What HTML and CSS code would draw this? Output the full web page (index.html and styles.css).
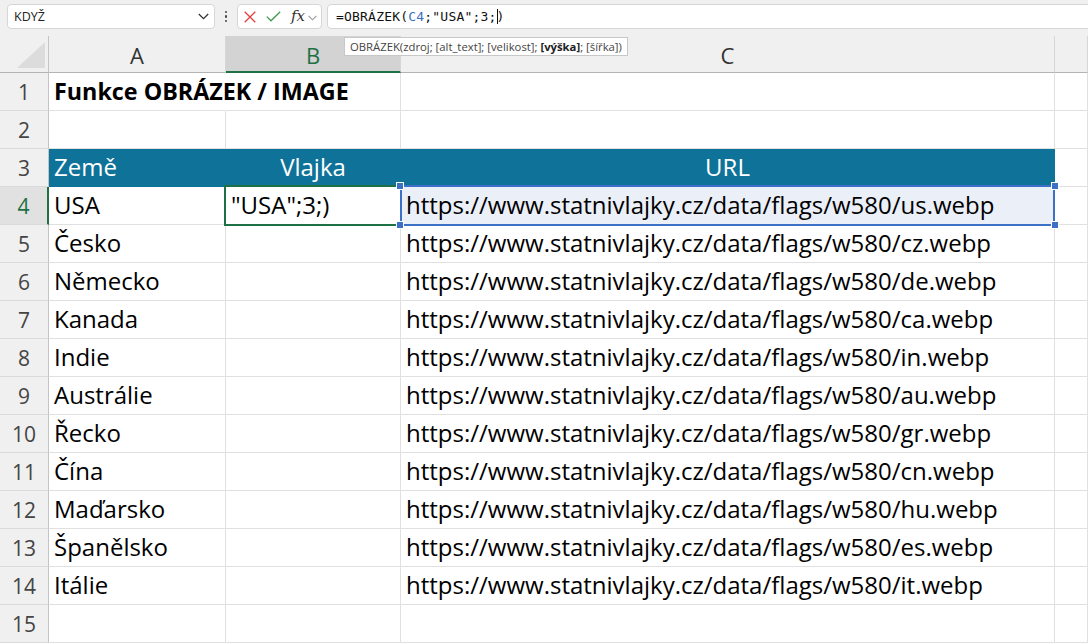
FILE: index.html
```html
<!DOCTYPE html>
<html lang="cs">
<head>
<meta charset="utf-8">
<title>OBRÁZEK</title>
<link rel="stylesheet" href="styles.css">
</head>
<body>
<div class="toolbar">
  <div class="namebox"><span>KDYŽ</span>
    <svg class="chev" width="11" height="7" viewBox="0 0 11 7"><polyline points="0.8,1 5.5,5.6 10.2,1" fill="none" stroke="#333" stroke-width="1.3"/></svg>
  </div>
  <div class="vdots"><i></i><i></i><i></i></div>
  <div class="fxbox">
    <svg width="12" height="12" viewBox="0 0 12 12" class="ic-x"><path d="M0.7 0.7L11.3 11.3M11.3 0.7L0.7 11.3" stroke="#e0403f" stroke-width="1.3" fill="none"/></svg>
    <svg width="15" height="11" viewBox="0 0 15 11" class="ic-ok"><polyline points="0.8,5.6 5,9.8 14.2,0.8" fill="none" stroke="#3f9b4f" stroke-width="1.3"/></svg>
    <span class="fx">fx</span>
    <svg class="chev small" width="9" height="6" viewBox="0 0 9 6"><polyline points="0.6,0.8 4.5,4.8 8.4,0.8" fill="none" stroke="#999" stroke-width="1.1"/></svg>
  </div>
  <div class="formula">=OBRÁZEK(<span class="ref">C4</span>;"USA";3;<span class="caret"></span>)</div>
</div>

<div class="tooltip">OBRÁZEK(zdroj; [alt_text]; [velikost]; <b>[výška]</b>; [šířka])</div>

<div class="sheet">
  <div class="corner"><svg width="48" height="36" viewBox="0 0 48 36"><polygon points="45,6 45,32 17,32" fill="#dcdcdc"/></svg></div>
  <div class="ch">A</div>
  <div class="ch sel">B</div>
  <div class="ch">C</div>
  <div class="ch"></div>

  <div class="rh">1</div><div class="c nob title">Funkce OBRÁZEK / IMAGE</div><div class="c"></div><div class="c"></div><div class="c"></div>
  <div class="rh">2</div><div class="c"></div><div class="c"></div><div class="c"></div><div class="c"></div>
  <div class="rh">3</div><div class="c th">Země</div><div class="c th center">Vlajka</div><div class="c th center">URL</div><div class="c"></div>
  <div class="rh sel">4</div><div class="c">USA</div><div class="c active">"USA";3;)</div><div class="c refcell">https://www.statnivlajky.cz/data/flags/w580/us.webp<i class="h tl"></i><i class="h tr"></i><i class="h bl"></i><i class="h br"></i></div><div class="c"></div>
  <div class="rh">5</div><div class="c">Česko</div><div class="c"></div><div class="c">https://www.statnivlajky.cz/data/flags/w580/cz.webp</div><div class="c"></div>
  <div class="rh">6</div><div class="c">Německo</div><div class="c"></div><div class="c">https://www.statnivlajky.cz/data/flags/w580/de.webp</div><div class="c"></div>
  <div class="rh">7</div><div class="c">Kanada</div><div class="c"></div><div class="c">https://www.statnivlajky.cz/data/flags/w580/ca.webp</div><div class="c"></div>
  <div class="rh">8</div><div class="c">Indie</div><div class="c"></div><div class="c">https://www.statnivlajky.cz/data/flags/w580/in.webp</div><div class="c"></div>
  <div class="rh">9</div><div class="c">Austrálie</div><div class="c"></div><div class="c">https://www.statnivlajky.cz/data/flags/w580/au.webp</div><div class="c"></div>
  <div class="rh">10</div><div class="c">Řecko</div><div class="c"></div><div class="c">https://www.statnivlajky.cz/data/flags/w580/gr.webp</div><div class="c"></div>
  <div class="rh">11</div><div class="c">Čína</div><div class="c"></div><div class="c">https://www.statnivlajky.cz/data/flags/w580/cn.webp</div><div class="c"></div>
  <div class="rh">12</div><div class="c">Maďarsko</div><div class="c"></div><div class="c">https://www.statnivlajky.cz/data/flags/w580/hu.webp</div><div class="c"></div>
  <div class="rh">13</div><div class="c">Španělsko</div><div class="c"></div><div class="c">https://www.statnivlajky.cz/data/flags/w580/es.webp</div><div class="c"></div>
  <div class="rh">14</div><div class="c">Itálie</div><div class="c"></div><div class="c">https://www.statnivlajky.cz/data/flags/w580/it.webp</div><div class="c"></div>
  <div class="rh">15</div><div class="c"></div><div class="c"></div><div class="c"></div><div class="c"></div>
</div>
</body>
</html>
```

FILE: styles.css
```css
* { box-sizing: border-box; }
html, body { margin: 0; padding: 0; }
body {
  width: 1088px;
  height: 643px;
  overflow: hidden;
  background: #fff;
  font-family: "Open Sans", "Noto Sans", sans-serif;
  position: relative;
}

/* toolbar */
.toolbar {
  height: 36px;
  background: #f0f0f0;
  display: flex;
  align-items: flex-start;
  padding: 4px 0 0 7px;
  overflow: hidden;
}
.namebox, .fxbox, .formula {
  height: 25px;
  background: #fff;
  border: 1px solid #d6d6d6;
  border-radius: 4px;
}
.namebox {
  width: 208px;
  display: flex;
  align-items: center;
  justify-content: space-between;
  padding: 0 5px 0 6px;
  font-size: 12.5px;
  color: #222;
  flex: none;
}
.vdots {
  width: 22px;
  height: 25px;
  display: flex;
  flex-direction: column;
  align-items: center;
  justify-content: center;
  gap: 2px;
  flex: none;
}
.vdots i { display: block; width: 2.5px; height: 2.5px; background: #444; border-radius: 50%; }
.fxbox {
  width: 85px;
  flex: none;
  display: flex;
  align-items: center;
  padding-left: 6px;
}
.ic-x { margin-right: 10px; }
.ic-ok { margin-right: 10px; }
.fx {
  font-family: "DejaVu Serif", "Liberation Serif", serif;
  font-style: italic;
  font-size: 15px;
  color: #333;
  line-height: 1;
  margin-right: 3px;
}
.chev.small { margin-top: 2px; }
.formula {
  margin-left: 5px;
  width: 800px;
  flex: none;
  padding-left: 8px;
  font-family: "DejaVu Sans Mono", "Liberation Mono", monospace;
  font-size: 13px;
  line-height: 23px;
  letter-spacing: 0.2px;
  color: #111;
  white-space: pre;
}
.formula .ref { color: #3d6fc4; }
.caret {
  display: inline-block;
  width: 1px;
  height: 15px;
  background: #111;
  vertical-align: -3px;
  margin-right: -1px;
}

/* tooltip */
.tooltip {
  position: absolute;
  left: 344px;
  top: 37px;
  height: 19px;
  padding: 0 5px;
  background: #fff;
  border: 1px solid #c8c8c8;
  font-size: 11.3px;
  line-height: 17px;
  color: #444;
  white-space: nowrap;
  z-index: 5;
}
.tooltip b { color: #222; }

/* sheet */
.sheet {
  display: grid;
  grid-template-columns: 49px 177px 175px 654px 33px;
  grid-template-rows: 37px repeat(15, 38px);
}
.corner {
  background: #f0f0f0;
  border-right: 1px solid #c4c4c4;
  border-bottom: 1px solid #b4b4b4;
}
.corner svg { display: block; }
.ch {
  background: #f0f0f0;
  border-right: 1px solid #d6d6d6;
  border-bottom: 1px solid #b4b4b4;
  display: flex;
  align-items: flex-end;
  justify-content: center;
  padding-bottom: 6px;
  font-size: 22px;
  line-height: 22px;
  color: #333;
}
.ch.sel {
  background: #d3d3d3;
  color: #1e7145;
  border-bottom: 2px solid #1e7145;
  padding-bottom: 5px;
}
.rh {
  background: #f0f0f0;
  border-right: 1px solid #c4c4c4;
  border-bottom: 1px solid #dadada;
  display: flex;
  align-items: flex-end;
  justify-content: center;
  padding-bottom: 7px;
  font-size: 21px;
  line-height: 21px;
  color: #444;
}
.rh.sel {
  background: #e1e1e1;
  color: #1e7145;
  border-right: 2px solid #1e7145;
}
.c {
  position: relative;
  border-right: 1px solid #e0e0e0;
  border-bottom: 1px solid #e0e0e0;
  display: flex;
  align-items: flex-end;
  padding: 0 5px 7px 5px;
  font-size: 24px;
  line-height: 24px;
  color: #000;
  white-space: nowrap;
  min-width: 0;
}
.c.nob { border-right-color: transparent; }
.title { font-weight: 700; font-size: 23.3px; z-index: 1; }
.th {
  background: #0f7399;
  color: #fff;
  border-right-color: #0f7399;
  border-bottom-color: #0f7399;
}
.center { justify-content: center; }
.active::after {
  content: "";
  position: absolute;
  top: -2px; left: -2px; right: -2px; bottom: -2px;
  border: 2px solid #1e7145;
  z-index: 2;
}
.refcell { background: #ebeff8; }
.refcell::after {
  content: "";
  position: absolute;
  top: -2px; left: -1px; right: -1px; bottom: -2px;
  border: 2px solid #3c6fc6;
  z-index: 3;
}
.h {
  position: absolute;
  width: 8px;
  height: 8px;
  background: #3c6fc6;
  border: 1px solid #fff;
  z-index: 4;
}
.h.tl { left: -5px; top: -5px; }
.h.tr { right: -5px; top: -5px; }
.h.bl { left: -5px; bottom: -5px; }
.h.br { right: -5px; bottom: -5px; }
```
